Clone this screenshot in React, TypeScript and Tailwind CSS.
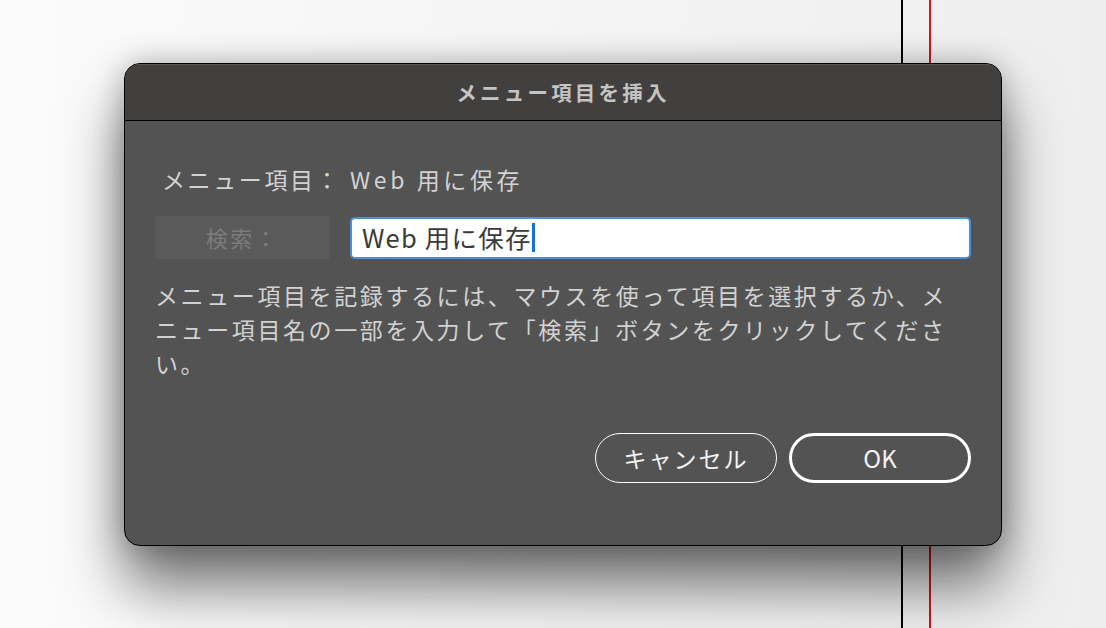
import React from "react";

const jp = { fontFamily: '"Noto Sans CJK JP", "Noto Sans", sans-serif' };

export default function App() {
  return (
    <div
      className="relative h-[628px] w-[1106px] overflow-hidden bg-gradient-to-r from-[#fbfbfb] to-[#eeeeee]"
      style={jp}
    >
      {/* guide lines behind the dialog */}
      <div className="absolute left-[901px] top-0 h-full w-[2px] bg-black" />
      <div className="absolute left-[929px] top-0 h-full w-[2px] bg-[#d01818]" />

      <div className="relative pl-[124px] pt-[63px]">
        <div className="flex h-[483px] w-[878px] flex-col overflow-hidden rounded-[16px] border border-black bg-[#535353] shadow-[0_40px_60px_rgba(0,0,0,0.55),0_0_30px_rgba(0,0,0,0.25)]">
          {/* title bar */}
          <div className="flex h-[57px] shrink-0 items-center justify-center border-b border-black bg-[#42403e] shadow-[inset_0_1px_0_rgba(255,255,255,0.12)]">
            <span className="text-[20.5px] font-bold tracking-[3.2px] text-[#c4c4c4]">
              メニュー項目を挿入
            </span>
          </div>

          <div className="flex flex-1 flex-col px-[30px] pt-[43px]">
            <div className="flex h-[30px] items-center pl-[7px] text-[23px] tracking-[2.6px] text-[#d2d2d2]">
              <span className="w-[188px]">メニュー項目：</span>
              <span className="tracking-[3.6px]">Web 用に保存</span>
            </div>

            <div className="mt-[22px] flex items-center gap-[20px]">
              <div className="flex h-[43px] w-[175px] items-center justify-center rounded-[3px] bg-[#5a5a5a] text-[22px] tracking-[2.5px] text-[#7c7c7c]">
                検索：
              </div>
              <div className="flex h-[42px] flex-1 items-center rounded-[5px] border-2 border-[#4a8fdc] bg-white pl-[10px] text-[25.5px] tracking-[1.2px] text-[#3a3a3a]">
                <span>Web 用に保存</span>
                <span className="h-[29px] w-[3px] bg-[#1a6fe0]" />
              </div>
            </div>

            <p className="mt-[19px] text-[23px] leading-[34px] tracking-[2.6px] text-[#d2d2d2]">
              メニュー項目を記録するには、マウスを使って項目を選択するか、メ
              ニュー項目名の一部を入力して「検索」ボタンをクリックしてくださ
              い。
            </p>

            <div className="mt-[53px] flex justify-end gap-[12px]">
              <button className="flex h-[50px] w-[182px] items-center justify-center rounded-full border-[1.5px] border-white text-[23px] tracking-[2px] text-[#f2f2f2]">
                キャンセル
              </button>
              <button className="flex h-[50px] w-[182px] items-center justify-center rounded-full border-[3px] border-white text-[24px] text-[#f2f2f2]">
                OK
              </button>
            </div>
          </div>
        </div>
      </div>
    </div>
  );
}
